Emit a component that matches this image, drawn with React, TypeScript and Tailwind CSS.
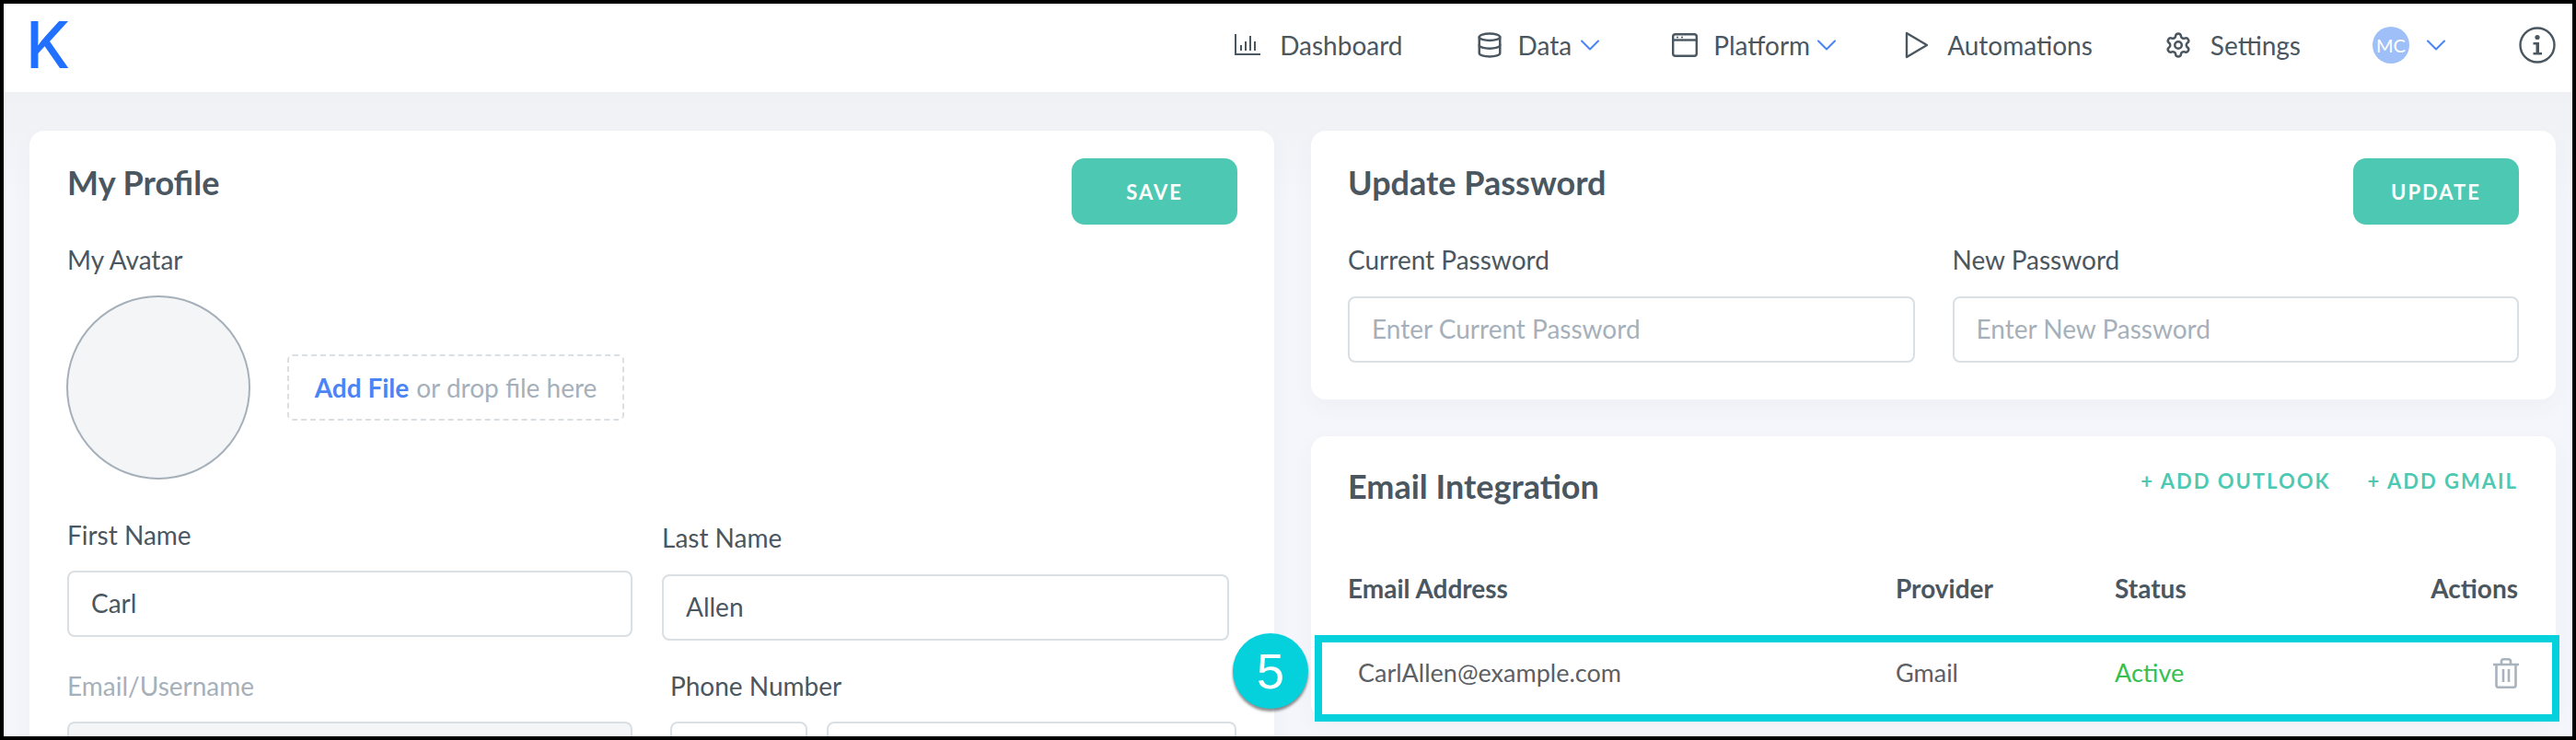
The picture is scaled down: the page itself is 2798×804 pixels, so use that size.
import React from 'react';
import { ChevronDown, Database, Settings } from 'lucide-react';

const fieldClass =
  'block h-[72px] rounded-[8px] border-2 border-[#d9dfe3] px-[24px] pb-[3px] text-[28px] text-[#4a5660] placeholder:text-[#a6b0ba] outline-none';

const labelClass = 'block text-[28px] leading-[30px] text-[#4a5660]';

const titleClass = 'text-[36px] font-bold leading-[38px] text-[#4a5660]';

const Chart = () => (
  <svg width="28" height="24" viewBox="0 0 28 24" fill="none" stroke="#4a5660" strokeWidth="2">
    <path d="M1 0v22h27" />
    <path d="M7 18v-6M12 18V8M17 18V2M22 18V8" />
  </svg>
);

const Platform = () => (
  <svg width="28" height="26" viewBox="0 0 28 26" fill="none" stroke="#4a5660" strokeWidth="2.4">
    <rect x="1.2" y="1.2" width="25.6" height="23.6" rx="2.5" />
    <path d="M1.2 7.5h25.6" />
    <path d="M5 4.4h2M10 4.4h2" strokeWidth="1.5" />
  </svg>
);

const Automations = () => (
  <svg width="26" height="30" viewBox="0 0 26 30" fill="none" stroke="#4a5660" strokeWidth="2.4" strokeLinejoin="round">
    <path d="M2 2l22 13L2 28z" />
  </svg>
);

const InfoIcon = () => (
  <svg width="40" height="40" viewBox="0 0 40 40" fill="none">
    <circle cx="20" cy="20" r="18.5" stroke="#4a5660" strokeWidth="2.4" />
    <circle cx="20" cy="11.5" r="2.6" fill="#4a5660" />
    <path d="M15.5 17h6.5v11h3v2.4H15.5V28h3v-8.6h-3z" fill="#4a5660" />
  </svg>
);

const Trash = () => (
  <svg width="28" height="33" viewBox="0 0 28 33" fill="none" stroke="#a8b3bd" strokeWidth="2.6">
    <path d="M0 7h28M9 6.5V3.5C9 2 10 1.3 11.5 1.3h5C18 1.3 19 2 19 3.5v3" />
    <path d="M3.5 7v22.5c0 1.4.8 2.2 2.2 2.2h16.6c1.4 0 2.2-.8 2.2-2.2V7" />
    <path d="M11 12v14M17 12v14" />
  </svg>
);

const NavChevron = () => <ChevronDown size={36} strokeWidth={1.4} className="text-[#4b84f5]" />;

const ActionButton = ({ label }: { label: string }) => (
  <button className="w-[180px] h-[72px] rounded-[14px] bg-[#4dc9b3] text-white text-[22px] font-bold tracking-[2px]">
    {label}
  </button>
);

const App = () => {
  return (
    <div
      className="h-[804px] w-full overflow-hidden border-4 border-black bg-[#f5f6fb]"
      style={{ fontFamily: 'Lato, "Open Sans", sans-serif' }}
    >
      <header className="flex h-[96px] items-center bg-white pb-[7px] pl-[24px] pr-[18px] text-[28px] text-[#4a5660]">
        <span className="font-['Inter',sans-serif] text-[70px] font-medium leading-none text-[#2170ff]">K</span>
        <nav className="ml-auto flex items-center">
          <Chart />
          <span className="ml-[21px]">Dashboard</span>
          <Database size={30} strokeWidth={2} className="ml-[79px]" />
          <span className="ml-[16px]">Data</span>
          <span className="ml-[2px]"><NavChevron /></span>
          <span className="ml-[71px]"><Platform /></span>
          <span className="ml-[17px]">Platform</span>
          <span><NavChevron /></span>
          <span className="ml-[67px]"><Automations /></span>
          <span className="ml-[20px]">Automations</span>
          <Settings size={30} strokeWidth={2} className="ml-[78px]" />
          <span className="ml-[20px]">Settings</span>
          <span className="ml-[78px] flex h-[40px] w-[40px] items-center justify-center rounded-full bg-[#9fbff8] text-[20px] text-white">
            MC
          </span>
          <span className="ml-[11px]"><NavChevron /></span>
          <span className="ml-[72px]"><InfoIcon /></span>
        </nav>
      </header>

      <main className="grid grid-cols-2 items-start gap-[40px] bg-gradient-to-b from-[#f0f1f5] to-[#f5f6fb] to-[120px] pb-[40px] pl-[28px] pr-[18px] pt-[42px]">
        {/* left card */}
        <section className="rounded-[16px] bg-white pb-[40px] pl-[41px] pr-[40px] pt-[30px] shadow-[0_8px_24px_rgba(60,70,110,0.04)]">
          <div className="flex items-start justify-between">
            <h2 className={`mt-[7px] ${titleClass}`}>My Profile</h2>
            <ActionButton label="SAVE" />
          </div>
          <span className={`${labelClass} mt-[23px]`}>My Avatar</span>
          <div className="mt-[24px] flex items-center">
            <div className="ml-[-1px] h-[200px] w-[200px] rounded-full border-2 border-[#a6b0ba] bg-[#f4f5f7]" />
            <div className="ml-[40px] flex h-[72px] w-[366px] items-center justify-center rounded-[6px] border-2 border-dashed border-[#d9dfe3] text-[28px] text-[#a6b0ba]">
              <span className="font-bold text-[#4b84f5]">Add File</span>
              <span className="ml-[8px]">or drop file here</span>
            </div>
          </div>
          <div className="mt-[45px] flex">
            <div className="w-[614px]">
              <label className={labelClass}>First Name</label>
              <input readOnly value="Carl" className={`${fieldClass} mt-[24px] w-full`} />
            </div>
            <div className="ml-[32px] mt-[3px] w-[616px]">
              <label className={labelClass}>Last Name</label>
              <input readOnly value="Allen" className={`${fieldClass} mt-[25px] w-full`} />
            </div>
          </div>
          <div className="mt-[34px] flex">
            <div className="w-[614px]">
              <label className="block text-[28px] leading-[30px] text-[#a6b0ba]">Email/Username</label>
              <input readOnly className={`${fieldClass} mt-[24px] w-full bg-[#f4f5f7]`} />
            </div>
            <div className="ml-[41px] w-[615px]">
              <label className={labelClass}>Phone Number</label>
              <div className="mt-[24px] flex gap-[21px]">
                <input readOnly className={`${fieldClass} w-[149px]`} />
                <input readOnly className={`${fieldClass} min-w-0 flex-1`} />
              </div>
            </div>
          </div>
        </section>

        <div className="flex flex-col gap-[40px]">
          {/* password card */}
          <section className="rounded-[16px] bg-white pb-[40px] pl-[40px] pr-[40px] pt-[30px] shadow-[0_8px_24px_rgba(60,70,110,0.04)]">
            <div className="flex items-start justify-between">
              <h2 className={`mt-[7px] ${titleClass}`}>Update Password</h2>
              <ActionButton label="UPDATE" />
            </div>
            <div className="mt-[23px] grid grid-cols-2 gap-[41px]">
              <div>
                <label className={labelClass}>Current Password</label>
                <input placeholder="Enter Current Password" className={`${fieldClass} mt-[25px] w-full`} />
              </div>
              <div>
                <label className={labelClass}>New Password</label>
                <input placeholder="Enter New Password" className={`${fieldClass} mt-[25px] w-full`} />
              </div>
            </div>
          </section>

          {/* email integration card */}
          <section className="relative h-[306px] rounded-[16px] bg-white pt-[35px] shadow-[0_8px_24px_rgba(60,70,110,0.04)]">
            <div className="flex items-start justify-between pl-[40px] pr-[41px]">
              <h2 className={titleClass}>Email Integration</h2>
              <div className="flex gap-[40px] text-[22px] font-bold leading-[28px] tracking-[2px] text-[#4dc9b3]">
                <span>+ ADD OUTLOOK</span>
                <span>+ ADD GMAIL</span>
              </div>
            </div>
            <div className="mt-[76px] flex items-center pl-[40px] pr-[41px] text-[28px] font-bold leading-[32px] text-[#4a5660]">
              <span className="w-[595px]">Email Address</span>
              <span className="w-[238px]">Provider</span>
              <span>Status</span>
              <span className="ml-auto">Actions</span>
            </div>
            <div className="ml-[4px] mr-[-4px] mt-[35px] flex h-[94px] items-center border-[8px] border-[#05d1dd] bg-white pb-[12px] pl-[39px] pr-[36px] text-[27px] text-[#5a6066]">
              <span className="w-[584px]">CarlAllen@example.com</span>
              <span className="w-[238px]">Gmail</span>
              <span className="text-[#37bf4f]">Active</span>
              <span className="ml-auto"><Trash /></span>
            </div>
            <div className="absolute left-[-85px] top-[214px] flex h-[82px] w-[82px] items-center justify-center rounded-full bg-[#05d1dd] font-['Liberation_Sans',sans-serif] text-[54px] text-white shadow-[0_3px_3px_rgba(0,0,0,0.45)]">
              5
            </div>
          </section>
        </div>
      </main>
    </div>
  );
};

export default App;
